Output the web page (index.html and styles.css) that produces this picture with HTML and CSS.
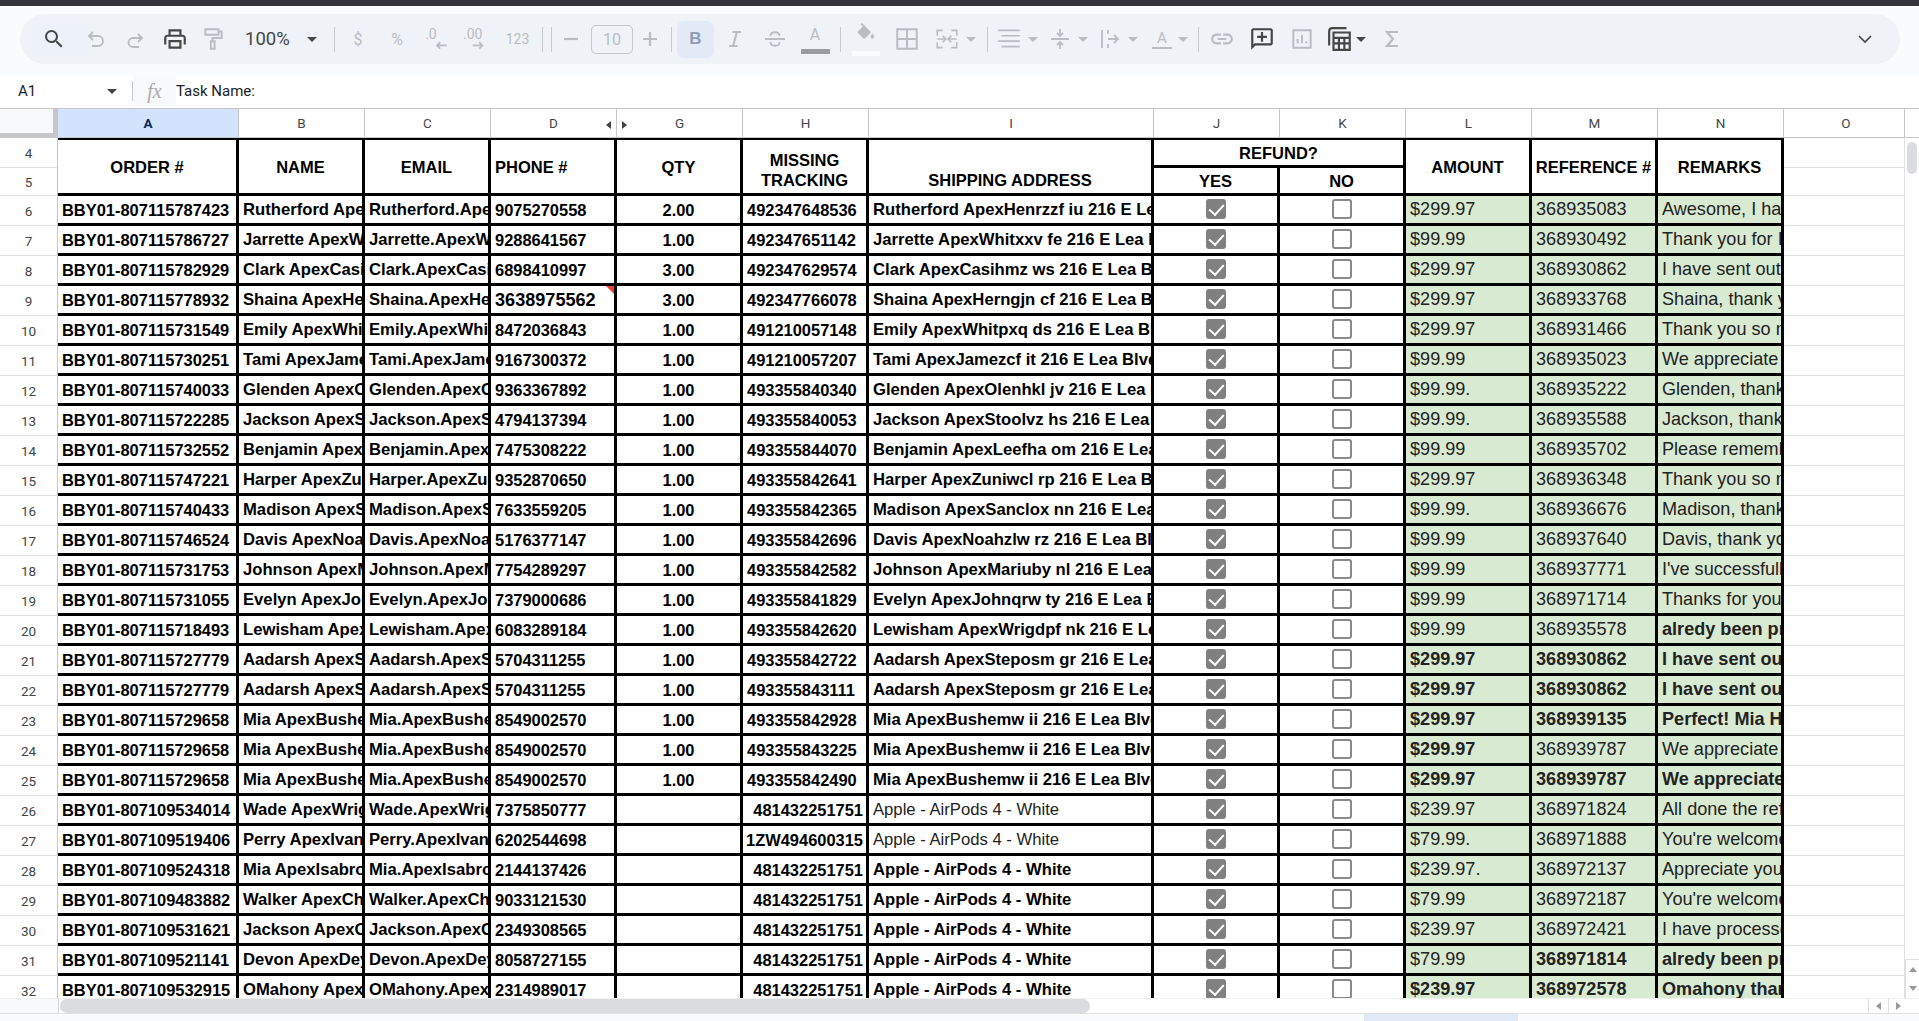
FILE: index.html
```html
<!DOCTYPE html>
<html lang="en">
<head>
<meta charset="utf-8">
<title>Sheet</title>
<link rel="stylesheet" href="styles.css">
</head>
<body>
<div class="topbar"></div>
<header class="toolbar">
<div class="pill">
<span class="tool focus"><svg class="ic dark" viewBox="0 0 24 24"><path d="M15.5 14h-.79l-.28-.27A6.471 6.471 0 0 0 16 9.5 6.5 6.5 0 1 0 9.5 16c1.61 0 3.09-.59 4.23-1.57l.27.28v.79l5 4.99L20.49 19l-4.99-5zm-6 0C7.01 14 5 11.99 5 9.5S7.01 5 9.5 5 14 7.01 14 9.5 11.99 14 9.5 14z"/></svg></span>
<span class="tool"><svg class="ic line" viewBox="0 0 24 24"><path d="M9 5 5 9l4 4M5 9h9a5 5 0 0 1 0 10H8"/></svg></span>
<span class="tool"><svg class="ic line" viewBox="0 0 24 24"><path d="m15 7 4 4-4 4M19 11h-9a4.500 4.500 0 0 0 0 9h6"/></svg></span>
<span class="tool"><svg class="ic dark big" viewBox="0 0 24 24"><path d="M19 8h-1V3H6v5H5c-1.660 0-3 1.340-3 3v6h4v4h12v-4h4v-6c0-1.660-1.340-3-3-3zM8 5h8v3H8V5zm8 14H8v-4h8v4zm2-2v-4H6v4H4v-6c0-.550.450-1 1-1h14c.550 0 1 .450 1 1v6h-2z"/></svg></span>
<span class="tool"><svg class="ic line big" viewBox="0 0 24 24"><path d="M5 3h12v5H5zM17 5h3v6h-8.500v3M10 14h3.500v7H10z"/></svg></span>
<span class="tool zoom"><span class="zoomval">100%</span><i class="ar dk"></i></span>
<span class="sep"></span>
<span class="tool txt">$</span>
<span class="tool txt">%</span>
<span class="tool"><svg class="ic lab" viewBox="0 0 26 26"><text x="2" y="13">.0</text><path d="M22 19h-9m3-3-3 3 3 3"/></svg></span>
<span class="tool"><svg class="ic lab" viewBox="0 0 26 26"><text x="0" y="13">.00</text><path d="M9 19h9m-3-3 3 3-3 3"/></svg></span>
<span class="tool txt num">123</span>
<span class="sep"></span>
<span class="tool end"><span class="sep"></span></span>
<span class="tool"><svg class="ic line thick" viewBox="0 0 24 24"><path d="M5 12h14"/></svg></span>
<span class="tool"><span class="fsize">10</span></span>
<span class="tool"><svg class="ic line thick" viewBox="0 0 24 24"><path d="M5 12h14M12 5v14"/></svg></span>
<span class="tool end"><span class="sep"></span></span>
<span class="tool"><span class="bold">B</span></span>
<span class="tool"><svg class="ic line thick" viewBox="0 0 24 24"><path d="M9.500 5H18M6 19h8.500M14 5l-4 14" /></svg></span>
<span class="tool"><svg class="ic line" viewBox="0 0 24 24"><path d="M2 12h20M7.500 9c0-5 9-5 9 0M7.500 15c0 5 9 5 9 0"/></svg></span>
<span class="tool"><span class="colorA">A</span></span>
<span class="tool end"><span class="sep"></span></span>
<span class="tool"><span class="fillwrap"><svg class="ic grey fill" viewBox="0 0 24 24"><path d="M16.560 8.940 7.620 0 6.210 1.410l2.380 2.380-5.150 5.150c-.590.590-.590 1.540 0 2.120l5.500 5.500c.290.290.680.440 1.060.440s.770-.150 1.060-.440l5.500-5.500c.590-.580.590-1.530 0-2.120zM19 11.500s-2 2.170-2 3.500c0 1.100.900 2 2 2s2-.900 2-2c0-1.330-2-3.500-2-3.500z"/></svg></span></span>
<span class="tool"><svg class="ic line big" viewBox="0 0 24 24"><path d="M3 3h18v18H3zM12 3v18M3 12h18"/></svg></span>
<span class="tool grp"><svg class="ic line big slim" viewBox="0 0 24 24"><path d="M8 4H3v5M16 4h5v5M8 20H3v-5M16 20h5v-5M3 12h8m-3-3 3 3-3 3M21 12h-8m3-3-3 3 3 3"/></svg><i class="ar"></i></span>
<span class="sep"></span>
<span class="tool grp"><svg class="ic line big slim" viewBox="0 0 24 24"><path d="M2 4h20M5 9h17M2 14h20M5 19h17"/></svg><i class="ar"></i></span>
<span class="tool grp"><svg class="ic line" viewBox="0 0 24 24"><path d="M3 12h18M12 2v7m-3-3 3 3 3-3M12 22v-7m-3 3 3-3 3 3"/></svg><i class="ar"></i></span>
<span class="tool grp"><svg class="ic line" viewBox="0 0 24 24"><path d="M4 3v18M10 12h10m-4-4 4 4-4 4M10 3v4M10 17v4"/></svg><i class="ar"></i></span>
<span class="tool grp"><span class="rotA">A</span><i class="ar"></i></span>
<span class="tool end"><span class="sep"></span></span>
<span class="tool"><svg class="ic grey big" viewBox="0 0 24 24"><path d="M3.900 12c0-1.710 1.390-3.100 3.100-3.100h4V7H7c-2.760 0-5 2.240-5 5s2.240 5 5 5h4v-1.900H7c-1.710 0-3.100-1.390-3.100-3.100zM8 13h8v-2H8v2zm9-6h-4v1.900h4c1.710 0 3.100 1.390 3.100 3.100s-1.390 3.100-3.100 3.100h-4V17h4c2.760 0 5-2.240 5-5s-2.240-5-5-5z"/></svg></span>
<span class="tool"><svg class="ic dark big" viewBox="0 0 24 24"><path d="M20 2H4c-1.100 0-2 .9-2 2v18l4-4h14c1.100 0 2-.9 2-2V4c0-1.100-.9-2-2-2zm0 14H5.170L4 17.170V4h16v12z"/><path d="M11 5.500h2V9h3.500v2H13v3.500h-2V11H7.500V9H11z"/></svg></span>
<span class="tool"><svg class="ic line big" viewBox="0 0 24 24"><path d="M4 4h16v16H4zM8 16v-4M12 16V8M16 16v-2"/></svg></span>
<span class="tool grp tight"><svg class="ic linedark big" viewBox="0 0 24 24"><path d="M2 18V5q0-3 3-3h13M6 6h15v16H6zM6 11h15M6 16h15M11 11v11M16 11v11"/></svg><i class="ar dk"></i></span>
<span class="tool"><svg class="ic line thick" viewBox="0 0 24 24"><path d="M18 5H7l6 7-6 7h11"/></svg></span>
<span class="tool end"><svg class="chev" viewBox="0 0 20 20"><path d="m4 7 6 6 6-6"/></svg></span>
</div>
</header>
<div class="fbar">
<span class="cellname">A1</span><i class="ar dk"></i><span class="fbsep"></span><span class="fx">fx</span><span class="ftext">Task Name:</span>
</div>
<main class="sheet">
<table class="grid">
<colgroup><col class="w-rh"><col class="w-a"><col class="w-c"><col class="w-c"><col class="w-c"><col class="w-c"><col class="w-c"><col class="w-i"><col class="w-c"><col class="w-c"><col class="w-c"><col class="w-c"><col class="w-c"><col class="w-o"><col class="w-g"></colgroup>
<thead>
<tr class="cols"><th class="corner"></th><th class="sel">A</th><th>B</th><th>C</th><th class="hidr">D</th><th class="hidl">G</th><th>H</th><th>I</th><th>J</th><th>K</th><th>L</th><th>M</th><th>N</th><th class="colo">O</th><th class="gut"></th></tr>
</thead>
<tbody>
<tr class="h4"><th class="rh">4</th><td class="hd" rowspan="2">ORDER #</td><td class="hd" rowspan="2">NAME</td><td class="hd" rowspan="2">EMAIL</td><td class="hd lft" rowspan="2">PHONE #</td><td class="hd" rowspan="2">QTY</td><td class="hd btm" rowspan="2">MISSING<br>TRACKING</td><td class="hd btm" rowspan="2">SHIPPING ADDRESS</td><td class="hd refund" colspan="2">REFUND?</td><td class="hd" rowspan="2">AMOUNT</td><td class="hd" rowspan="2">REFERENCE #</td><td class="hd" rowspan="2">REMARKS</td><td class="o"></td><td class="gut"></td></tr>
<tr class="h5"><th class="rh">5</th><td class="hd yn">YES</td><td class="hd yn">NO</td><td class="o"></td><td class="gut"></td></tr>
<tr><th class="rh">6</th><td>BBY01-807115787423</td><td>Rutherford ApexHenrzzf</td><td>Rutherford.ApexHenrzzf</td><td>9075270558</td><td>2.00</td><td>492347648536</td><td>Rutherford ApexHenrzzf iu 216 E Lea Blvd</td><td><i class="cb on"></i></td><td><i class="cb"></i></td><td>$299.97</td><td>368935083</td><td>Awesome, I have</td><td class="o"></td><td class="gut"></td></tr>
<tr><th class="rh">7</th><td>BBY01-807115786727</td><td>Jarrette ApexWhitxxv</td><td>Jarrette.ApexWhitxxv</td><td>9288641567</td><td>1.00</td><td>492347651142</td><td>Jarrette ApexWhitxxv fe 216 E Lea Blvd</td><td><i class="cb on"></i></td><td><i class="cb"></i></td><td>$99.99</td><td>368930492</td><td>Thank you for I have</td><td class="o"></td><td class="gut"></td></tr>
<tr><th class="rh">8</th><td>BBY01-807115782929</td><td>Clark ApexCasihmz</td><td>Clark.ApexCasihmz</td><td>6898410997</td><td>3.00</td><td>492347629574</td><td>Clark ApexCasihmz ws 216 E Lea Blvd</td><td><i class="cb on"></i></td><td><i class="cb"></i></td><td>$299.97</td><td>368930862</td><td>I have sent out</td><td class="o"></td><td class="gut"></td></tr>
<tr><th class="rh">9</th><td>BBY01-807115778932</td><td>Shaina ApexHerngjn</td><td>Shaina.ApexHerngjn</td><td class="note">3638975562</td><td>3.00</td><td>492347766078</td><td>Shaina ApexHerngjn cf 216 E Lea Blvd</td><td><i class="cb on"></i></td><td><i class="cb"></i></td><td>$299.97</td><td>368933768</td><td>Shaina, thank you</td><td class="o"></td><td class="gut"></td></tr>
<tr><th class="rh">10</th><td>BBY01-807115731549</td><td>Emily ApexWhitpxq</td><td>Emily.ApexWhitpxq</td><td>8472036843</td><td>1.00</td><td>491210057148</td><td>Emily ApexWhitpxq ds 216 E Lea Blvd</td><td><i class="cb on"></i></td><td><i class="cb"></i></td><td>$299.97</td><td>368931466</td><td>Thank you so much</td><td class="o"></td><td class="gut"></td></tr>
<tr><th class="rh">11</th><td>BBY01-807115730251</td><td>Tami ApexJamezcf</td><td>Tami.ApexJamezcf</td><td>9167300372</td><td>1.00</td><td>491210057207</td><td>Tami ApexJamezcf it 216 E Lea Blvd</td><td><i class="cb on"></i></td><td><i class="cb"></i></td><td>$99.99</td><td>368935023</td><td>We appreciate your</td><td class="o"></td><td class="gut"></td></tr>
<tr><th class="rh">12</th><td>BBY01-807115740033</td><td>Glenden ApexOlenhkl</td><td>Glenden.ApexOlenhkl</td><td>9363367892</td><td>1.00</td><td>493355840340</td><td>Glenden ApexOlenhkl jv 216 E Lea Blvd</td><td><i class="cb on"></i></td><td><i class="cb"></i></td><td>$99.99.</td><td>368935222</td><td>Glenden, thank you</td><td class="o"></td><td class="gut"></td></tr>
<tr><th class="rh">13</th><td>BBY01-807115722285</td><td>Jackson ApexStoolvz</td><td>Jackson.ApexStoolvz</td><td>4794137394</td><td>1.00</td><td>493355840053</td><td>Jackson ApexStoolvz hs 216 E Lea Blvd</td><td><i class="cb on"></i></td><td><i class="cb"></i></td><td>$99.99.</td><td>368935588</td><td>Jackson, thank you</td><td class="o"></td><td class="gut"></td></tr>
<tr><th class="rh">14</th><td>BBY01-807115732552</td><td>Benjamin ApexLeefha</td><td>Benjamin.ApexLeefha</td><td>7475308222</td><td>1.00</td><td>493355844070</td><td>Benjamin ApexLeefha om 216 E Lea Blvd</td><td><i class="cb on"></i></td><td><i class="cb"></i></td><td>$99.99</td><td>368935702</td><td>Please remember</td><td class="o"></td><td class="gut"></td></tr>
<tr><th class="rh">15</th><td>BBY01-807115747221</td><td>Harper ApexZuniwcl</td><td>Harper.ApexZuniwcl</td><td>9352870650</td><td>1.00</td><td>493355842641</td><td>Harper ApexZuniwcl rp 216 E Lea Blvd</td><td><i class="cb on"></i></td><td><i class="cb"></i></td><td>$299.97</td><td>368936348</td><td>Thank you so much</td><td class="o"></td><td class="gut"></td></tr>
<tr><th class="rh">16</th><td>BBY01-807115740433</td><td>Madison ApexSanclox</td><td>Madison.ApexSanclox</td><td>7633559205</td><td>1.00</td><td>493355842365</td><td>Madison ApexSanclox nn 216 E Lea Blvd</td><td><i class="cb on"></i></td><td><i class="cb"></i></td><td>$99.99.</td><td>368936676</td><td>Madison, thank you</td><td class="o"></td><td class="gut"></td></tr>
<tr><th class="rh">17</th><td>BBY01-807115746524</td><td>Davis ApexNoahzlw</td><td>Davis.ApexNoahzlw</td><td>5176377147</td><td>1.00</td><td>493355842696</td><td>Davis ApexNoahzlw rz 216 E Lea Blvd</td><td><i class="cb on"></i></td><td><i class="cb"></i></td><td>$99.99</td><td>368937640</td><td>Davis, thank you</td><td class="o"></td><td class="gut"></td></tr>
<tr><th class="rh">18</th><td>BBY01-807115731753</td><td>Johnson ApexMariuby</td><td>Johnson.ApexMariuby</td><td>7754289297</td><td>1.00</td><td>493355842582</td><td>Johnson ApexMariuby nl 216 E Lea Blvd</td><td><i class="cb on"></i></td><td><i class="cb"></i></td><td>$99.99</td><td>368937771</td><td>I've successfully</td><td class="o"></td><td class="gut"></td></tr>
<tr><th class="rh">19</th><td>BBY01-807115731055</td><td>Evelyn ApexJohnqrw</td><td>Evelyn.ApexJohnqrw</td><td>7379000686</td><td>1.00</td><td>493355841829</td><td>Evelyn ApexJohnqrw ty 216 E Lea Blvd</td><td><i class="cb on"></i></td><td><i class="cb"></i></td><td>$99.99</td><td>368971714</td><td>Thanks for your</td><td class="o"></td><td class="gut"></td></tr>
<tr><th class="rh">20</th><td>BBY01-807115718493</td><td>Lewisham ApexWrigdpf</td><td>Lewisham.ApexWrigdpf</td><td>6083289184</td><td>1.00</td><td>493355842620</td><td>Lewisham ApexWrigdpf nk 216 E Lea Blvd</td><td><i class="cb on"></i></td><td><i class="cb"></i></td><td>$99.99</td><td>368935578</td><td class="b">alredy been processed</td><td class="o"></td><td class="gut"></td></tr>
<tr><th class="rh">21</th><td>BBY01-807115727779</td><td>Aadarsh ApexSteposm</td><td>Aadarsh.ApexSteposm</td><td>5704311255</td><td>1.00</td><td>493355842722</td><td>Aadarsh ApexSteposm gr 216 E Lea Blvd</td><td><i class="cb on"></i></td><td><i class="cb"></i></td><td class="b">$299.97</td><td class="b">368930862</td><td class="b">I have sent out</td><td class="o"></td><td class="gut"></td></tr>
<tr><th class="rh">22</th><td>BBY01-807115727779</td><td>Aadarsh ApexSteposm</td><td>Aadarsh.ApexSteposm</td><td>5704311255</td><td>1.00</td><td>493355843111</td><td>Aadarsh ApexSteposm gr 216 E Lea Blvd</td><td><i class="cb on"></i></td><td><i class="cb"></i></td><td class="b">$299.97</td><td class="b">368930862</td><td class="b">I have sent out</td><td class="o"></td><td class="gut"></td></tr>
<tr><th class="rh">23</th><td>BBY01-807115729658</td><td>Mia ApexBushemw</td><td>Mia.ApexBushemw</td><td>8549002570</td><td>1.00</td><td>493355842928</td><td>Mia ApexBushemw ii 216 E Lea Blvd</td><td><i class="cb on"></i></td><td><i class="cb"></i></td><td class="b">$299.97</td><td class="b">368939135</td><td class="b">Perfect! Mia Hi</td><td class="o"></td><td class="gut"></td></tr>
<tr><th class="rh">24</th><td>BBY01-807115729658</td><td>Mia ApexBushemw</td><td>Mia.ApexBushemw</td><td>8549002570</td><td>1.00</td><td>493355843225</td><td>Mia ApexBushemw ii 216 E Lea Blvd</td><td><i class="cb on"></i></td><td><i class="cb"></i></td><td class="b">$299.97</td><td>368939787</td><td>We appreciate your</td><td class="o"></td><td class="gut"></td></tr>
<tr><th class="rh">25</th><td>BBY01-807115729658</td><td>Mia ApexBushemw</td><td>Mia.ApexBushemw</td><td>8549002570</td><td>1.00</td><td>493355842490</td><td>Mia ApexBushemw ii 216 E Lea Blvd</td><td><i class="cb on"></i></td><td><i class="cb"></i></td><td class="b">$299.97</td><td class="b">368939787</td><td class="b">We appreciate your</td><td class="o"></td><td class="gut"></td></tr>
<tr><th class="rh">26</th><td>BBY01-807109534014</td><td>Wade ApexWrigley</td><td>Wade.ApexWrigley</td><td>7375850777</td><td></td><td class="r">481432251751</td><td class="n">Apple - AirPods 4 - White</td><td><i class="cb on"></i></td><td><i class="cb"></i></td><td>$239.97</td><td>368971824</td><td>All done the refund</td><td class="o"></td><td class="gut"></td></tr>
<tr><th class="rh">27</th><td>BBY01-807109519406</td><td>Perry ApexIvanov</td><td>Perry.ApexIvanov</td><td>6202544698</td><td></td><td class="r">1ZW494600315</td><td class="n">Apple - AirPods 4 - White</td><td><i class="cb on"></i></td><td><i class="cb"></i></td><td>$79.99.</td><td>368971888</td><td>You're welcome</td><td class="o"></td><td class="gut"></td></tr>
<tr><th class="rh">28</th><td>BBY01-807109524318</td><td>Mia ApexIsabrook</td><td>Mia.ApexIsabrook</td><td>2144137426</td><td></td><td class="r">481432251751</td><td>Apple - AirPods 4 - White</td><td><i class="cb on"></i></td><td><i class="cb"></i></td><td>$239.97.</td><td>368972137</td><td>Appreciate your</td><td class="o"></td><td class="gut"></td></tr>
<tr><th class="rh">29</th><td>BBY01-807109483882</td><td>Walker ApexChase</td><td>Walker.ApexChase</td><td>9033121530</td><td></td><td class="r">481432251751</td><td>Apple - AirPods 4 - White</td><td><i class="cb on"></i></td><td><i class="cb"></i></td><td>$79.99</td><td>368972187</td><td>You're welcome</td><td class="o"></td><td class="gut"></td></tr>
<tr><th class="rh">30</th><td>BBY01-807109531621</td><td>Jackson ApexOwen</td><td>Jackson.ApexOwen</td><td>2349308565</td><td></td><td class="r">481432251751</td><td>Apple - AirPods 4 - White</td><td><i class="cb on"></i></td><td><i class="cb"></i></td><td>$239.97</td><td>368972421</td><td>I have processed</td><td class="o"></td><td class="gut"></td></tr>
<tr><th class="rh">31</th><td>BBY01-807109521141</td><td>Devon ApexDeyoung</td><td>Devon.ApexDeyoung</td><td>8058727155</td><td></td><td class="r">481432251751</td><td>Apple - AirPods 4 - White</td><td><i class="cb on"></i></td><td><i class="cb"></i></td><td>$79.99</td><td class="b">368971814</td><td class="b">alredy been processed</td><td class="o"></td><td class="gut"></td></tr>
<tr><th class="rh">32</th><td>BBY01-807109532915</td><td>OMahony ApexKeane</td><td>OMahony.ApexKeane</td><td>2314989017</td><td></td><td class="r">481432251751</td><td>Apple - AirPods 4 - White</td><td><i class="cb on"></i></td><td><i class="cb"></i></td><td class="b">$239.97</td><td class="b">368972578</td><td class="b">Omahony thank you</td><td class="o"></td><td class="gut"></td></tr>
</tbody>
</table>
<div class="vthumb"></div>
<div class="varrows"><i class="up"></i><i class="down"></i></div>
</main>
<div class="hbar">
<div class="hcorner"></div>
<div class="htrack"><div class="hthumb"></div></div>
<div class="harrows"><i class="left"></i><i class="right"></i></div>
</div>
<footer class="tabs"><div class="tab"></div></footer>
</body>
</html>
```
FILE: styles.css
```css
* { box-sizing: border-box; }
html, body { margin: 0; padding: 0; }
body { width: 1919px; height: 1021px; overflow: hidden; display: flex; flex-direction: column; background: #fff; font-family: Roboto, "Liberation Sans", sans-serif; color: #222; }

.topbar { height: 6px; background: #36343b; flex: none; }
.toolbar { height: 70px; flex: none; background: #f9fbfd; padding: 8px 19px 12px 20px; }
.pill { height: 50px; border-radius: 25px; background: #eff2f7; padding: 0 25px 0 12px; display: grid; align-items: center; grid-template-columns: 43px 42px 36px 44px 32px 105px 1px 46px 32px 48px 32px 49px 1px 9px 38px 44px 32px 6px 47px 32px 48px 32px 10px 50px 32px 64px 1px 58px 44px 56px 48px 5px 46px 34px 46px 42px 50px 1fr; }
.tool { display: flex; align-items: center; justify-content: center; height: 37px; min-width: 0; }
.tool.end { justify-content: flex-end; }
.tool.grp { gap: 6px; }
.tool.tight { gap: 3px; }
.tool.focus { background: #edf2fa; border-radius: 6px; width: 53px; height: 33px; justify-content: flex-start; padding-left: 10px; }
.tool.zoom { justify-content: flex-start; padding-left: 16px; gap: 17px; }
.zoomval { font-size: 18.5px; color: #444746; }
.txt { font-size: 16px; color: #b9bdc2; }
.txt.num { font-size: 14px; }
.sep { display: block; width: 1px; height: 25px; background: #c4c7cb; }
.ic { width: 24px; height: 24px; flex: none; display: block; }
.ic.big { width: 26px; height: 26px; }
.ic.fill { width: 22px; height: 22px; }
.ic.dark { fill: #444746; }
.ic.grey { fill: #b9bdc2; }
.ic.line { fill: none; stroke: #b9bdc2; stroke-width: 1.8; }
.ic.line.thick { stroke-width: 2.2; }
.ic.line.slim { stroke-width: 1.5; }
.ic.linedark { fill: none; stroke: #444746; stroke-width: 2; }
.ic.lab { width: 28px; height: 28px; fill: none; stroke: #b9bdc2; stroke-width: 1.6; }
.ic.lab text { font-size: 13px; fill: #b9bdc2; stroke: none; font-family: Roboto, sans-serif; }
.fsize { width: 42px; height: 29px; border: 1px solid #c4c7cb; border-radius: 5px; font-size: 16px; color: #b9bdc2; display: flex; align-items: center; justify-content: center; }
.bold { width: 37px; height: 37px; background: #e3eaf7; border-radius: 7px; display: flex; align-items: center; justify-content: center; font: bold 17px "Liberation Sans", sans-serif; color: #8f9db8; }
.colorA { width: 29px; height: 30px; border-bottom: 5px solid #999b9e; text-align: center; font-size: 16px; line-height: 22px; color: #b9bdc2; }
.fillwrap { width: 28px; height: 33px; border-bottom: 5px solid #f9fbfd; display: flex; justify-content: center; }
.rotA { width: 20px; text-align: center; font-size: 15px; line-height: 17px; color: #b9bdc2; border-bottom: 2px solid #b9bdc2; }
.ar { display: block; width: 0; height: 0; flex: none; border-left: 5px solid transparent; border-right: 5px solid transparent; border-top: 5px solid #b9bdc2; }
.ar.dk { border-top-color: #444746; }
.chev { width: 20px; height: 20px; fill: none; stroke: #444746; stroke-width: 1.6; }

.fbar { height: 33px; flex: none; display: flex; align-items: center; border-bottom: 1px solid #c7c7c7; background: #fff; padding: 0 0 2px 18px; }
.cellname { width: 89px; font-size: 15px; color: #1f1f1f; }
.fbsep { width: 1px; height: 20px; background: #c7c7c7; margin-left: 15px; }
.fx { width: 43px; height: 30px; background: #f8f9fa; font: italic 20px/30px "Liberation Serif", serif; color: #aaa; text-align: center; }
.ftext { font-size: 15px; color: #222; }

.sheet { height: 889px; flex: none; overflow: hidden; position: relative; }
.grid { table-layout: fixed; border-collapse: separate; border-spacing: 0; width: 1919px; font-family: "Liberation Sans", Arial, sans-serif; }
.w-rh { width: 58px; } .w-a { width: 181px; } .w-c { width: 126px; } .w-i { width: 285px; } .w-o { width: 121px; } .w-g { width: 14px; }

.cols th { height: 29px; padding: 0; font: 400 13.5px Roboto, sans-serif; color: #444746; border-right: 1px solid #c7c7c7; border-bottom: 1px solid #c7c7c7; position: relative; }
.cols .corner { background: #f8f9fa; border-right: 5px solid #c7c7c7; border-bottom: 5px solid #c7c7c7; }
.cols .sel { background: #d3e3fd; font-weight: 700; color: #0b2a5c; }
.cols .colo { padding-left: 4px; }
.cols .gut { border-right: 0; background: #fff; }
.hidr::after { content: ""; position: absolute; right: 5px; top: 12px; border: 4px solid transparent; border-right: 5px solid #444; border-left: 0; }
.hidl::before { content: ""; position: absolute; left: 5px; top: 12px; border: 4px solid transparent; border-left: 5px solid #444; border-right: 0; }

tbody tr { height: 30px; }
tbody .rh { padding: 0; font: 400 13.5px Roboto, sans-serif; color: #444746; border-right: 1px solid #c7c7c7; border-bottom: 1px solid #e0e0e0; background: #fff; }
tbody td { height: 30px; padding: 1px 0 0 4px; overflow: hidden; white-space: nowrap; font-size: 16.45px; font-weight: 700; color: #000; border-right: 3px solid #000; border-bottom: 3px solid #000; position: relative; }
tbody td:nth-child(3), tbody td:nth-child(4), tbody td:nth-child(8) { font-size: 16.67px; }
tbody td:nth-child(6) { text-align: center; padding: 1px 0 0; }
tbody td:nth-child(9), tbody td:nth-child(10) { text-align: center; padding: 0; }
tbody td:nth-child(11), tbody td:nth-child(12), tbody td:nth-child(13) { background: #d9ead3; color: #222; font-size: 18.1px; font-weight: 400; padding: 0 0 0 4px; }
tbody td.b { font-weight: 700; }
tbody td.r { text-align: right; padding: 1px 3px 0 0; }
tbody td.n { font-weight: 400; color: #222; }
tbody td.note { font-size: 18.1px; }
tbody td.note::after { content: ""; position: absolute; top: 0; right: 0; border-top: 8px solid #ea4335; border-left: 8px solid transparent; }
tbody td.o { border-right: 1px solid #e0e0e0; border-bottom: 1px solid #e0e0e0; padding: 0; background: #fff; }
tbody td.gut { border: 0; padding: 0; background: #fff; }

.h4 { height: 30px; }
.h5 { height: 28px; }
.h4 .rh { height: 30px; }
.h5 .rh { height: 28px; }
.h4 td.o, .h5 td.o, .h4 td.gut, .h5 td.gut { height: auto; }
tbody td.hd { text-align: center; padding: 0; height: auto; font-size: 16.5px; font-weight: 700; line-height: 20px; background: #fff; color: #000; }
.h4 td.hd { border-top: 2px solid #000; }
tbody td.hd.lft { text-align: left; padding-left: 4px; }
tbody td.hd.btm { vertical-align: bottom; padding-bottom: 3px; }
tbody td.hd.yn { padding: 0; }

.cb { display: block; width: 20px; height: 20px; margin: 0 auto 1px; border: 2.5px solid #8a8a8a; border-radius: 3px; position: relative; }
.cb.on { background: #808080; border-color: #808080; }
.cb.on::after { content: ""; position: absolute; left: 4.5px; top: 0; width: 7px; height: 12px; border-right: 2px solid #fff; border-bottom: 2px solid #fff; transform: rotate(42deg); }

.vthumb { position: absolute; left: 1907px; top: 33px; width: 10px; height: 32px; border-radius: 5px; background: #dadce0; }
.varrows { position: absolute; left: 1905px; top: 850px; width: 14px; height: 39px; background: #fff; border-top: 1px solid #e0e0e0; border-left: 1px solid #e0e0e0; display: flex; flex-direction: column; align-items: center; justify-content: space-around; }
.up { border-left: 4px solid transparent; border-right: 4px solid transparent; border-bottom: 5px solid #999; }
.down { border-left: 4px solid transparent; border-right: 4px solid transparent; border-top: 5px solid #999; }

.hbar { height: 16px; flex: none; display: flex; background: #fff; border-bottom: 1px solid #e0e0e0; border-top: 1px solid #f0f0f0; }
.hcorner { width: 59px; background: #f8f9fa; border-right: 1px solid #d8d8d8; }
.htrack { flex: 1; padding-left: 1px; }
.hthumb { width: 1030px; height: 14px; border-radius: 7px; background: #dadce0; }
.harrows { width: 51px; display: flex; align-items: center; }
.harrows i { width: 20px; height: 14px; display: flex; align-items: center; justify-content: center; border-left: 1px solid #e0e0e0; }
.left::before { content: ""; border-top: 4px solid transparent; border-bottom: 4px solid transparent; border-right: 5px solid #999; }
.right::before { content: ""; border-top: 4px solid transparent; border-bottom: 4px solid transparent; border-left: 5px solid #999; }

.tabs { flex: 1; background: #f9fbfd; padding-left: 1364px; }
.tab { width: 154px; height: 100%; background: #e1e9f7; }
```
